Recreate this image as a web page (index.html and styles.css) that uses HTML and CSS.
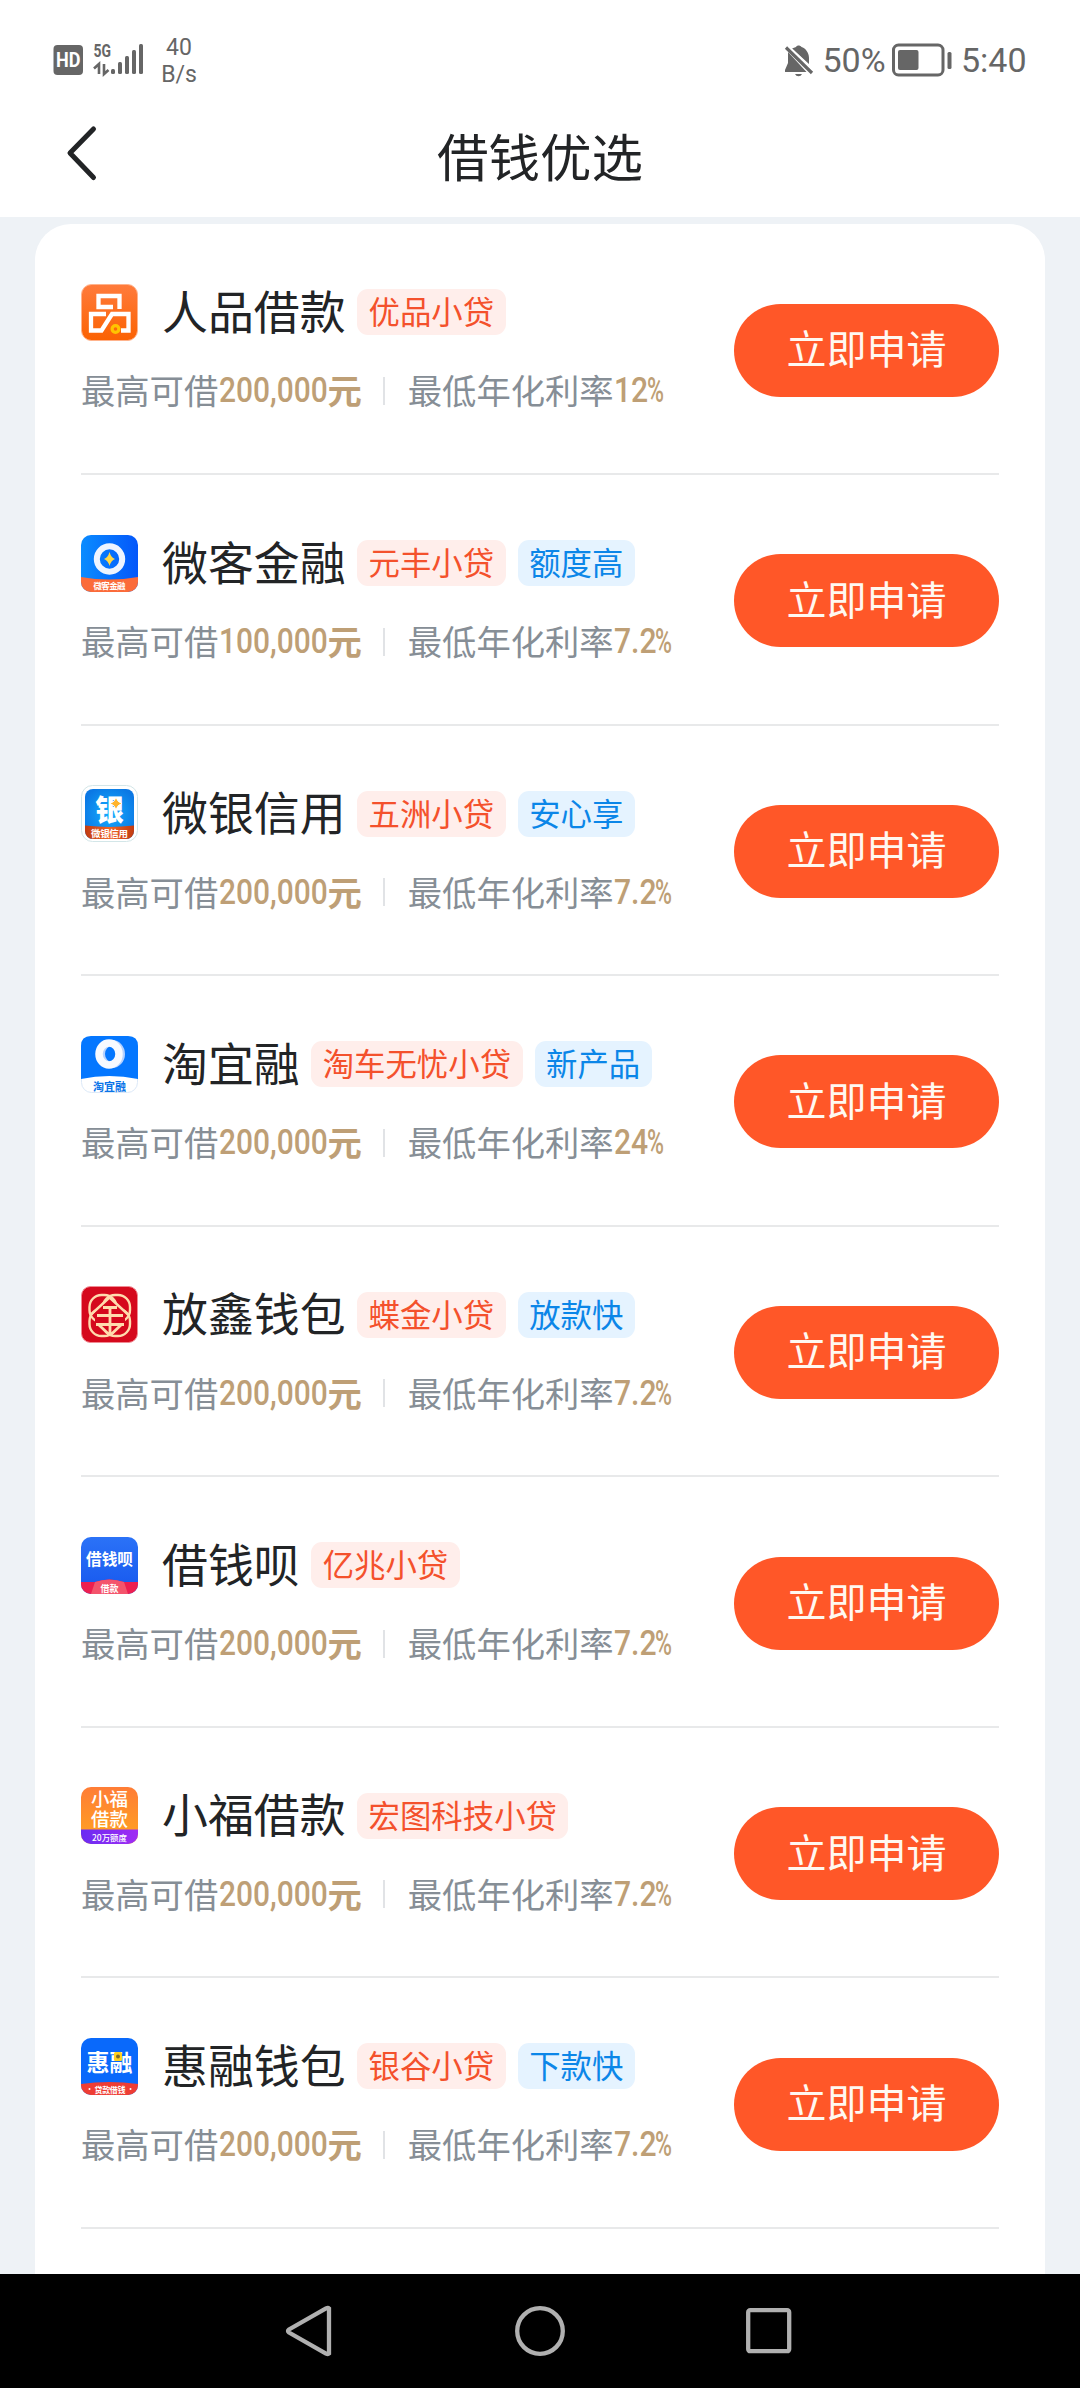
FILE: index.html
```html
<!DOCTYPE html>
<html lang="zh-CN">
<head>
<meta charset="utf-8">
<title>借钱优选</title>
<link rel="stylesheet" href="styles.css">
</head>
<body>
<div class="screen">
  <div class="status">
    <svg class="signal" width="92" height="34" viewBox="0 0 92 34">
      <rect x="0.5" y="2" width="29.5" height="30" rx="4"/>
      <text class="hd" x="3" y="24.3" textLength="24.5" lengthAdjust="spacingAndGlyphs">HD</text>
      <text class="fiveg" x="40.5" y="14.2" textLength="17.5" lengthAdjust="spacingAndGlyphs">5G</text>
      <path d="M41 25.5l5-4.5v10M51 21v10l4.500-4" fill="none" stroke="#666" stroke-width="2.600"/>
      <rect x="58" y="26" width="4" height="5" rx="1.500"/><rect x="65" y="19" width="4" height="12" rx="1.500"/><rect x="72" y="13" width="4" height="18" rx="1.500"/><rect x="79" y="7" width="4" height="24" rx="1.500"/><rect x="86" y="1" width="4" height="30" rx="1.500"/>
    </svg>
    <div class="speed"><span>40</span><span>B/s</span></div>
    <svg class="bell" width="30" height="32" viewBox="0 0 30 32">
      <path d="M4 8v11L1 26v2h21.500zM8 4.500L25 20v-6C25 8 21 4 17.500 3 16 1 13 1 12 3z"/>
      <path d="M11 30h7q-1 2.300-3.500 2.300T11 30z"/>
      <path d="M2 3.500l26 25.500" stroke="#666" stroke-width="3.200"/>
      <path d="M5 2.500l24 23.500" stroke="#fff" stroke-width="1.600"/>
    </svg>
    <span class="pct">50%</span>
    <svg class="battery" width="60" height="34" viewBox="0 0 60 34">
      <rect x="1.500" y="2" width="49.500" height="30" rx="5" fill="none" stroke="#666" stroke-width="3"/>
      <rect x="6" y="7" width="20.500" height="20" rx="2"/>
      <rect x="55.500" y="9" width="4" height="17" rx="1.500"/>
    </svg>
    <span class="clock">5:40</span>
  </div>
  <header class="header">
    <svg class="back" width="36" height="60" viewBox="0 0 36 60"><path d="M28.500 5L5 29 28.500 53.500" fill="none" stroke="#222426" stroke-width="5" stroke-linecap="round" stroke-linejoin="round"/></svg>
    <h1>借钱优选</h1>
  </header>
  <main class="content">
    <div class="card">

      <section class="row">
        <div class="info">
          <div class="head">
            <svg class="logo" viewBox="0 0 57 57">
              <defs><linearGradient id="g1" x1="0" y1="0" x2="0" y2="1"><stop offset="0" stop-color="#ff7b3c"/><stop offset="1" stop-color="#fb6202"/></linearGradient></defs>
              <rect x=".5" y=".5" width="56" height="56" rx="10" fill="url(#g1)" stroke="#ffb38c"/>
              <path d="M32 23H17.500V12H38.500V25M25 30H10V46.500H20.500L31 30H47.500V46.500H40" fill="none" stroke="#fff" stroke-width="4.300"/>
              <circle cx="34.500" cy="45" r="3.400" fill="none" stroke="#ffc400" stroke-width="3.200"/>
            </svg>
            <h2>人品借款</h2><span class="tag red">优品小贷</span>
          </div>
          <p class="terms"><span class="lab4">最高可借</span><b class="amt"><i>200,000</i></b><b class="yuan">元</b><span class="sep"></span><span class="lab6">最低年化利率</span><b class="rate two"><i>12</i></b><b class="sign"><i>%</i></b></p>
        </div>
        <button class="apply">立即申请</button>
      </section>

      <section class="row">
        <div class="info">
          <div class="head">
            <svg class="logo" viewBox="0 0 57 57">
              <defs><clipPath id="c"><rect width="57" height="57" rx="10"/></clipPath><linearGradient id="g2"><stop offset="0" stop-color="#0a8cff"/><stop offset="1" stop-color="#0457fa"/></linearGradient></defs>
              <g clip-path="url(#c)"><rect width="57" height="57" fill="url(#g2)"/><path d="M0 42Q28 47 57 42V57H0z" fill="#fb6b3a"/></g>
              <circle cx="28.500" cy="24" r="12.700" fill="none" stroke="#eff5ff" stroke-width="6"/>
              <path d="M28.500 17Q30 22.500 34 24 30 25.500 28.500 31 27 25.500 23 24 27 22.500 28.500 17z" fill="#ffd84a"/>
              <text class="lt" x="28.500" y="54" font-size="8.500" textLength="32">微客金融</text>
            </svg>
            <h2>微客金融</h2><span class="tag red">元丰小贷</span><span class="tag blue">额度高</span>
          </div>
          <p class="terms"><span class="lab4">最高可借</span><b class="amt"><i>100,000</i></b><b class="yuan">元</b><span class="sep"></span><span class="lab6">最低年化利率</span><b class="rate"><i>7.2</i></b><b class="sign"><i>%</i></b></p>
        </div>
        <button class="apply">立即申请</button>
      </section>

      <section class="row">
        <div class="info">
          <div class="head">
            <svg class="logo" viewBox="0 0 57 57">
              <defs><clipPath id="c3"><rect x="4" y="4" width="49" height="50" rx="8"/></clipPath><radialGradient id="g3"><stop offset="0" stop-color="#15adff"/><stop offset="1" stop-color="#0b78e4"/></radialGradient><linearGradient id="g3r"><stop offset="0" stop-color="#b9350d"/><stop offset=".5" stop-color="#f06427"/><stop offset="1" stop-color="#b9350d"/></linearGradient></defs>
              <rect x=".5" y=".5" width="56" height="56" rx="11" fill="#fff" stroke="#d3e6e8"/>
              <g clip-path="url(#c3)"><rect width="57" height="57" fill="url(#g3)"/><path d="M0 40Q28 44 57 40V57H0z" fill="url(#g3r)"/></g>
              <text class="lt heavy" x="28.500" y="35.500" font-size="29">银</text>
              <path d="M35 12Q36 17 41 18.500 36 20 35 25 34 20 29 18.500 34 17 35 12z" fill="#ffb32d" stroke="#fff" stroke-width="1"/>
              <text class="lt" x="28.500" y="52" font-size="9.500" textLength="37">微银信用</text>
            </svg>
            <h2>微银信用</h2><span class="tag red">五洲小贷</span><span class="tag blue">安心享</span>
          </div>
          <p class="terms"><span class="lab4">最高可借</span><b class="amt"><i>200,000</i></b><b class="yuan">元</b><span class="sep"></span><span class="lab6">最低年化利率</span><b class="rate"><i>7.2</i></b><b class="sign"><i>%</i></b></p>
        </div>
        <button class="apply">立即申请</button>
      </section>

      <section class="row">
        <div class="info">
          <div class="head">
            <svg class="logo" viewBox="0 0 57 57">
              <rect x=".5" y=".5" width="56" height="56" rx="10" fill="#fff" stroke="#dce9f8"/>
              <path d="M0 10Q0 0 10 0H47Q57 0 57 10V43Q28 37 0 43z" fill="#0477ff"/>
              <ellipse cx="31" cy="18" rx="10" ry="11" fill="none" stroke="#b5d2ff" stroke-width="6"/>
              <ellipse cx="28" cy="18" rx="10" ry="11" fill="none" stroke="#f7faff" stroke-width="7.500"/>
              <text class="lt navy" x="28.500" y="54.500" font-size="11">淘宜融</text>
            </svg>
            <h2>淘宜融</h2><span class="tag red">淘车无忧小贷</span><span class="tag blue">新产品</span>
          </div>
          <p class="terms"><span class="lab4">最高可借</span><b class="amt"><i>200,000</i></b><b class="yuan">元</b><span class="sep"></span><span class="lab6">最低年化利率</span><b class="rate two"><i>24</i></b><b class="sign"><i>%</i></b></p>
        </div>
        <button class="apply">立即申请</button>
      </section>

      <section class="row">
        <div class="info">
          <div class="head">
            <svg class="logo" viewBox="0 0 57 57">
              <rect x=".5" y=".5" width="56" height="56" rx="9" fill="#d5091d" stroke="#f08b93"/>
              <g fill="none" stroke="#ffdcae" stroke-width="2.400">
                <rect x="8.500" y="9" width="27" height="27" rx="12"/>
                <rect x="22" y="9" width="27" height="27" rx="12"/>
                <rect x="8.500" y="23" width="27" height="27" rx="12"/>
                <rect x="22" y="23" width="27" height="27" rx="12"/>
              </g>
              <path d="M28.500 12L44 26V40L29 48 14 40V26z" fill="#d5091d"/>
              <g fill="none" stroke="#ffdcae">
                <path d="M10 28.500L28.500 11.500 47 28.500" stroke-width="2.400"/>
                <path d="M22 21.500H36M16 29.500H42M29 21.500V48M15 38.500H43M18 39L28 48.500M40 39L30 48.500" stroke-width="2.800"/>
              </g>
            </svg>
            <h2>放鑫钱包</h2><span class="tag red">蝶金小贷</span><span class="tag blue">放款快</span>
          </div>
          <p class="terms"><span class="lab4">最高可借</span><b class="amt"><i>200,000</i></b><b class="yuan">元</b><span class="sep"></span><span class="lab6">最低年化利率</span><b class="rate"><i>7.2</i></b><b class="sign"><i>%</i></b></p>
        </div>
        <button class="apply">立即申请</button>
      </section>

      <section class="row">
        <div class="info">
          <div class="head">
            <svg class="logo" viewBox="0 0 57 57">
              <defs><linearGradient id="g6" x1="0" y1="0" x2="0" y2="1"><stop offset="0" stop-color="#2b72f7"/><stop offset="1" stop-color="#1657ee"/></linearGradient></defs>
              <g clip-path="url(#c)"><rect width="57" height="57" fill="url(#g6)"/><path d="M0 45H14Q28 40 43 45H57V57H0z" fill="#ed1f50"/><path d="M14 45Q28 40 43 45L47 57H10z" fill="#f4546c"/></g>
              <text class="lt" x="28.500" y="27.500" font-size="16" textLength="47" lengthAdjust="spacingAndGlyphs">借钱呗</text>
              <text class="lt" x="28.500" y="54.500" font-size="9">借款</text>
            </svg>
            <h2>借钱呗</h2><span class="tag red">亿兆小贷</span>
          </div>
          <p class="terms"><span class="lab4">最高可借</span><b class="amt"><i>200,000</i></b><b class="yuan">元</b><span class="sep"></span><span class="lab6">最低年化利率</span><b class="rate"><i>7.2</i></b><b class="sign"><i>%</i></b></p>
        </div>
        <button class="apply">立即申请</button>
      </section>

      <section class="row">
        <div class="info">
          <div class="head">
            <svg class="logo" viewBox="0 0 57 57">
              <defs><linearGradient id="g7" x1="0" y1="0" x2="0" y2="1"><stop offset="0" stop-color="#ff7d36"/><stop offset="1" stop-color="#ffa51f"/></linearGradient><linearGradient id="g7p"><stop offset="0" stop-color="#6a2cf2"/><stop offset="1" stop-color="#a12cf4"/></linearGradient></defs>
              <g clip-path="url(#c)"><rect width="57" height="57" fill="url(#g7)"/><rect y="42.500" width="57" height="15" fill="url(#g7p)"/></g>
              <text class="lt mid" x="28.500" y="19" font-size="18.500">小福</text>
              <circle cx="21.500" cy="36" r="3.600" fill="none" stroke="#ffd21a" stroke-width="2"/>
              <text class="lt mid" x="28.500" y="38.500" font-size="18.500">借款</text>
              <text class="lt mid" x="28.500" y="54" font-size="8.500" textLength="35" lengthAdjust="spacingAndGlyphs">20万额度</text>
            </svg>
            <h2>小福借款</h2><span class="tag red">宏图科技小贷</span>
          </div>
          <p class="terms"><span class="lab4">最高可借</span><b class="amt"><i>200,000</i></b><b class="yuan">元</b><span class="sep"></span><span class="lab6">最低年化利率</span><b class="rate"><i>7.2</i></b><b class="sign"><i>%</i></b></p>
        </div>
        <button class="apply">立即申请</button>
      </section>

      <section class="row">
        <div class="info">
          <div class="head">
            <svg class="logo" viewBox="0 0 57 57">
              <g clip-path="url(#c)"><rect width="57" height="57" fill="#0969fb"/><path d="M0 46Q28 42 57 46V57H0z" fill="#ee3d34"/></g>
              <text class="lt" x="28.500" y="32.500" font-size="23">惠融</text>
              <rect x="33" y="14" width="8" height="9" rx="1.500" fill="#ffd21e"/><circle cx="37" cy="18.500" r="2" fill="#7d6a29"/>
              <text class="lt" x="29" y="54.500" font-size="8" textLength="31">贷款借钱</text>
              <circle cx="8.500" cy="51" r="1" fill="#fff"/><circle cx="49.500" cy="51" r="1" fill="#fff"/>
            </svg>
            <h2>惠融钱包</h2><span class="tag red">银谷小贷</span><span class="tag blue">下款快</span>
          </div>
          <p class="terms"><span class="lab4">最高可借</span><b class="amt"><i>200,000</i></b><b class="yuan">元</b><span class="sep"></span><span class="lab6">最低年化利率</span><b class="rate"><i>7.2</i></b><b class="sign"><i>%</i></b></p>
        </div>
        <button class="apply">立即申请</button>
      </section>

    </div>
  </main>
  <nav class="nav">
    <svg viewBox="0 0 54 54"><path d="M45 4.500V49.500Q44 50.500 42 49.500L5 28.500Q3 27 5 25.500L42 4.500Q44 3.500 45 4.500z"/></svg>
    <svg viewBox="0 0 54 54"><circle cx="27" cy="27" r="22.800"/></svg>
    <svg viewBox="0 0 54 54"><rect x="6.200" y="6.200" width="41" height="41" rx="2"/></svg>
  </nav>
</div>
</body>
</html>
```
FILE: styles.css
```css
* { box-sizing: border-box; }

body {
  margin: 0;
  background: #fff;
  font-family: "Noto Sans CJK SC", sans-serif;
}

.screen {
  width: 1080px;
  height: 2388px;
  display: flex;
  flex-direction: column;
  overflow: hidden;
}

/* status bar */
.status {
  height: 118px;
  flex: none;
  display: flex;
  align-items: center;
  padding: 2px 54px 0 53px;
  color: #666;
  fill: #666;
  font-family: Roboto, sans-serif;
}
.status svg { display: block; flex: none; overflow: visible; }
.signal text { font-family: Roboto, sans-serif; font-weight: 700; }
.signal .hd { fill: #fff; font-size: 19.5px; }
.signal .fiveg { font-size: 18.5px; }
.speed {
  width: 46px;
  margin-left: 11px;
  display: flex;
  flex-direction: column;
  align-items: center;
  font-size: 23px;
  line-height: 27px;
  padding-top: 2px;
}
.bell { margin-left: auto; }
.pct { margin-left: 8.500px; width: 64px; font-size: 34px; line-height: 40px; }
.battery { margin-left: 5px; }
.clock { margin-left: 9.500px; width: 65px; font-size: 34px; line-height: 40px; }
.pct, .clock { white-space: nowrap; }

/* title bar */
.header {
  height: 99px;
  flex: none;
  display: grid;
  grid-template-columns: 100px 1fr 100px;
  align-items: center;
  padding-bottom: 26px;
}
.back { margin-left: 65px; margin-top: -2px; }
.header h1 {
  margin: 0;
  text-align: center;
  font-size: 51.500px;
  line-height: 60px;
  font-weight: 400;
  color: #222426;
}

/* product list */
.content {
  flex: 1;
  min-height: 0;
  overflow: hidden;
  background: #eef2f6;
  padding: 7px 35px 0;
}
.card {
  height: 2100px;
  background: #fff;
  border-radius: 36px;
  padding: 0.4px 46px 0 46px;
}
.row {
  height: 250.57px;
  display: flex;
  justify-content: space-between;
  border-bottom: 2px solid #e8e9ea;
}
.info { padding-top: 59.6px; }
.head { display: flex; align-items: center; height: 57px; }
.logo { width: 57px; height: 57px; flex: none; overflow: visible; }
.head h2 {
  margin: -7px 11.500px 0 24px;
  font-size: 45.900px;
  line-height: 56px;
  font-weight: 400;
  color: #222426;
  white-space: nowrap;
}
.tag {
  height: 46px;
  padding: 0 11.500px;
  border-radius: 11px;
  font-size: 31.400px;
  line-height: 43px;
  white-space: nowrap;
}
.tag + .tag { margin-left: 12px; }
.red { background: #ffeeeb; color: #f4512c; }
.blue { background: #e5f3ff; color: #0b86e8; }

.terms {
  margin: 28.500px 0 0;
  height: 40px;
  display: flex;
  align-items: center;
  font-size: 34.300px;
  line-height: 40px;
  color: #868e96;
  white-space: nowrap;
}
.terms b { color: #be9f76; font-weight: 700; }
.terms i { font: 500 35px/40px Roboto, sans-serif; display: inline-block; transform-origin: 0 50%; }
.lab4 { width: 137.500px; }
.lab6 { width: 206px; }
.amt { width: 109px; }
.amt i { transform: scaleX(0.855); }
.rate { width: 41.500px; }
.rate i { transform: scaleX(0.86); }
.rate.two { width: 33.500px; }
.sign { width: 17px; }
.sign i { transform: scaleX(0.66); }
.sep { width: 2px; height: 28px; background: #e1e3e6; margin: 3px 22.500px 0 21.500px; }

.apply {
  width: 265px;
  height: 93px;
  margin-top: 79.300px;
  padding: 0 0 6px;
  border: 0;
  border-radius: 47px;
  background: #ff5728;
  color: #fff8f1;
  font: 400 40px/60px "Noto Sans CJK SC", sans-serif;
}

/* lettering inside product logos */
.lt { fill: #fff; font-weight: 700; text-anchor: middle; }
.lt.heavy { font-weight: 900; }
.lt.mid { font-weight: 500; }
.lt.navy { fill: #0873e8; }

/* system navigation */
.nav {
  height: 114px;
  flex: none;
  background: #000;
  display: flex;
  justify-content: center;
  align-items: center;
  gap: 175px;
}
.nav svg { width: 54px; height: 54px; fill: none; stroke: #b0b0b0; stroke-width: 4.300; }
```
